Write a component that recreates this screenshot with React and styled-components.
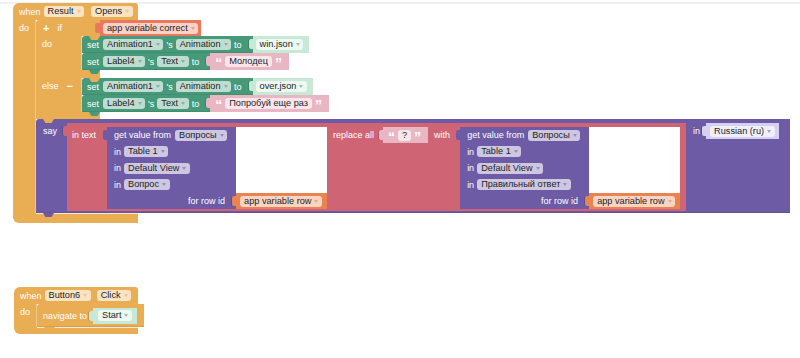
import React from 'react';
import styled, { createGlobalStyle } from 'styled-components';

// block palette
const C = {
	event: '#e9ad54',
	green: '#469a7a',
	mint: '#c8e9d5',
	pink: '#e9b7c3',
	varRed: '#ea785c',
	varOrange: '#e9834f',
	red: '#cf6474',
	purple: '#6d5ba6',
	lilac: '#d7d1f1'
};

const GlobalStyle = createGlobalStyle`
	html, body { margin: 0; padding: 0; background: #fff; }
	body { font-family: "Liberation Sans", Arial, sans-serif; }
`;

const Workspace = styled.div`
	position: relative;
	width: 800px;
	height: 358px;
	overflow: hidden;
	background: #fff;
`;

const TopRule = styled.div`
	margin-top: 2px;
	height: 2px;
	background: #eef0f6;
`;

// top level blocks sit on the free canvas
const EventBlock = styled.div`
	position: absolute;
	left: ${(p) => p.$x}px;
	top: ${(p) => p.$y}px;
	display: flex;
	flex-direction: column;
	align-items: flex-start;
`;

const EventHead = styled.div`
	display: flex;
	align-items: center;
	width: ${(p) => p.$w}px;
	height: 17px;
	box-sizing: border-box;
	padding: 0 6px;
	background: ${C.event};
	border-radius: 6px 3px 0 0;
`;

const Label = styled.span`
	flex: none;
	color: #fff;
	font-size: 9px;
	line-height: 16px;
	white-space: nowrap;
	margin: 0 ${(p) => p.$mr || 0}px 0 ${(p) => p.$ml || 0}px;
`;

const Plus = styled.span`
	flex: none;
	color: #fff;
	font-size: 11px;
	font-weight: bold;
	line-height: 16px;
	margin-left: ${(p) => p.$ml || 0}px;
`;

const Chip = styled.span`
	flex: none;
	display: inline-flex;
	align-items: center;
	gap: 3px;
	height: 11px;
	padding: 0 ${(p) => (p.$plain ? 4 : 3.5)}px 0 4px;
	margin-left: ${(p) => p.$ml || 0}px;
	border-radius: 3px;
	background: rgba(255, 255, 255, 0.66);
	color: #1e1e1e;
	font-size: 9.2px;
	line-height: 11px;
	white-space: nowrap;
`;

const Caret = styled.span`
	width: 0;
	height: 0;
	border-left: 2.5px solid transparent;
	border-right: 2.5px solid transparent;
	border-top: 3px solid ${(p) => p.$c};
	opacity: 0.55;
`;

const Field = ({ c, ml, plain, children }) => (
	<Chip $ml={ml} $plain={plain}>
		{children}
		{!plain && <Caret $c={c} />}
	</Chip>
);

const Quote = styled.span`
	flex: none;
	align-self: flex-start;
	margin-top: 3px;
	height: 12px;
	color: #fff;
	font-size: 14px;
	font-weight: bold;
	line-height: 14px;
`;

const Section = styled.div`
	display: flex;
	align-items: stretch;
`;

const Spine = styled.div`
	flex: none;
	display: flex;
	align-items: flex-start;
	width: ${(p) => p.$w}px;
	box-sizing: border-box;
	padding-left: ${(p) => p.$pl || 6}px;
	background: ${C.event};
`;

const Stack = styled.div`
	display: flex;
	flex-direction: column;
	align-items: flex-start;
	box-shadow: -1px 0 0 rgba(255, 255, 255, 0.35);
`;

// orange arms of C shaped blocks (header, else bar, bottom)
const Arm = styled.div`
	position: relative;
	display: flex;
	align-items: center;
	width: ${(p) => p.$w}px;
	height: ${(p) => p.$h}px;
	box-sizing: border-box;
	padding-left: 7px;
	background: ${C.event};
	border-radius: ${(p) => p.$r || '0'};
	${(p) =>
		p.$tab !== undefined &&
		`&::after {
		content: '';
		position: absolute;
		z-index: 2;
		left: ${p.$tab}px;
		bottom: -4px;
		width: 11px;
		height: 4px;
		background: ${C.event};
		clip-path: polygon(0 0, 100% 0, 78% 100%, 22% 100%);
	}`}
	${(p) =>
		p.$hl !== undefined &&
		`&::before {
		content: '';
		position: absolute;
		left: ${p.$hl}px;
		right: 0;
		top: 0;
		height: 1px;
		background: rgba(255, 255, 255, 0.75);
	}`}
`;

const HeadRow = styled.div`
	display: flex;
	align-items: stretch;
`;

const CBlock = styled.div`
	display: flex;
	flex-direction: column;
	align-items: flex-start;
`;

const StmtRow = styled.div`
	display: flex;
	align-items: stretch;
`;

const StmtBody = styled.div`
	position: relative;
	display: flex;
	align-items: center;
	gap: ${(p) => p.$gap ?? 3}px;
	height: ${(p) => p.$h || 17}px;
	box-sizing: border-box;
	padding: 0 ${(p) => p.$pr ?? 6}px 0 ${(p) => p.$pl ?? 5}px;
	background: ${(p) => p.$c};
	border-radius: 3px 0 0 0;
	box-shadow: inset 0 -1px 0 rgba(0, 0, 0, 0.08);
	&::after {
		content: '';
		position: absolute;
		z-index: 2;
		left: 7px;
		bottom: -4px;
		width: 11px;
		height: 4px;
		background: ${(p) => p.$c};
		clip-path: polygon(0 0, 100% 0, 78% 100%, 22% 100%);
	}
`;

const SayBody = styled(StmtBody)`
	align-items: flex-start;
	height: auto;
	padding: 4px 11px 2px 7px;
`;

const ValueBlock = styled.div`
	position: relative;
	flex: none;
	display: flex;
	align-items: center;
	gap: ${(p) => p.$gap ?? 4}px;
	height: ${(p) => p.$h || 17}px;
	box-sizing: border-box;
	padding: 0 ${(p) => p.$pr ?? 5}px 0 ${(p) => p.$pl ?? 5}px;
	margin-left: ${(p) => p.$ml || 0}px;
	background: ${(p) => p.$c};
	&::before {
		content: '';
		position: absolute;
		left: -4px;
		top: 3px;
		width: 4px;
		height: 10px;
		background: ${(p) => p.$c};
		border-radius: 2px 0 0 2px;
		box-shadow: -1px 0 0 rgba(0, 0, 0, 0.15);
	}
`;

const ReplaceBlock = styled(ValueBlock)`
	align-items: flex-start;
	gap: 0;
	height: auto;
	padding: 4px 6px 2px 5px;
`;

const GetGrid = styled.div`
	position: relative;
	flex: none;
	display: grid;
	grid-template-columns: 129px auto;
	grid-template-rows: 66px 16px;
	margin-left: ${(p) => p.$ml || 0}px;
	&::before {
		content: '';
		position: absolute;
		left: -4px;
		top: 3px;
		width: 4px;
		height: 10px;
		background: ${C.purple};
		border-radius: 2px 0 0 2px;
	}
`;

const GetPanel = styled.div`
	display: flex;
	flex-direction: column;
	padding-left: 7px;
	background: ${C.purple};
`;

const GetLine = styled.div`
	display: flex;
	align-items: center;
	gap: ${(p) => p.$gap ?? 3}px;
	height: 16.5px;
`;

const Blank = styled.div`
	background: #fff;
`;

const GetFoot = styled.div`
	display: flex;
	align-items: center;
	justify-content: flex-end;
	padding-right: 11px;
	background: ${C.purple};
`;

const GetValue = ({ ml, column }) => (
	<GetGrid $ml={ml}>
		<GetPanel>
			<GetLine $gap={4}>
				<Label>get value from</Label>
				<Field c={C.purple}>Вопросы</Field>
			</GetLine>
			<GetLine>
				<Label>in</Label>
				<Field c={C.purple}>Table 1</Field>
			</GetLine>
			<GetLine>
				<Label>in</Label>
				<Field c={C.purple}>Default View</Field>
			</GetLine>
			<GetLine>
				<Label>in</Label>
				<Field c={C.purple}>{column}</Field>
			</GetLine>
		</GetPanel>
		<Blank />
		<GetFoot>
			<Label>for row id</Label>
		</GetFoot>
		<ValueBlock $c={C.varOrange} $h={16} $pl={4} $pr={5}>
			<Field c={C.varOrange}>app variable row</Field>
		</ValueBlock>
	</GetGrid>
);

const SetRow = ({ comp, prop, children }) => (
	<StmtRow>
		<StmtBody $c={C.green} $pr={11}>
			<Label $mr={1}>set</Label>
			<Field c={C.green}>{comp}</Field>
			<Label>'s</Label>
			<Field c={C.green}>{prop}</Field>
			<Label>to</Label>
		</StmtBody>
		{children}
	</StmtRow>
);

const Asset = ({ name }) => (
	<ValueBlock $c={C.mint} $pl={3} $pr={6}>
		<Field c={C.green}>{name}</Field>
	</ValueBlock>
);

const Text = ({ children, h, ml }) => (
	<ValueBlock $c={C.pink} $h={h} $ml={ml} $pl={5} $pr={7} $gap={3}>
		<Quote>“</Quote>
		<Field plain>{children}</Field>
		<Quote>”</Quote>
	</ValueBlock>
);

export default function App() {
	return (
		<Workspace>
			<GlobalStyle />
			<TopRule />

			<EventBlock $x={13} $y={3}>
				<EventHead $w={125}>
					<Label>when</Label>
					<Field c={C.event} ml={3}>
						Result
					</Field>
					<Field c={C.event} ml={7}>
						Opens
					</Field>
				</EventHead>
				<Section>
					<Spine $w={23}>
						<Label>do</Label>
					</Spine>
					<Stack>
						<CBlock>
							<HeadRow>
								<Arm $w={64} $h={16} $r="3px 0 0 0" $tab={53}>
									<Plus>+</Plus>
									<Label $ml={8}>if</Label>
								</Arm>
								<ValueBlock $c={C.varRed} $h={16} $pl={3} $pr={3}>
									<Field c={C.varRed}>app variable correct</Field>
								</ValueBlock>
							</HeadRow>
							<Section>
								<Spine $w={46}>
									<Label>do</Label>
								</Spine>
								<Stack>
									<SetRow comp="Animation1" prop="Animation">
										<Asset name="win.json" />
									</SetRow>
									<SetRow comp="Label4" prop="Text">
										<Text>Молодец</Text>
									</SetRow>
								</Stack>
							</Section>
							<Arm $w={64} $h={8} $tab={53} />
							<Section>
								<Spine $w={46}>
									<Label>else</Label>
									<Plus $ml={8}>−</Plus>
								</Spine>
								<Stack>
									<SetRow comp="Animation1" prop="Animation">
										<Asset name="over.json" />
									</SetRow>
									<SetRow comp="Label4" prop="Text">
										<Text>Попробуй еще раз</Text>
									</SetRow>
								</Stack>
							</Section>
							<Arm $w={64} $h={7} $tab={7} />
						</CBlock>

						<SayBody $c={C.purple} $gap={0}>
							<Label>say</Label>
							<ReplaceBlock $c={C.red} $ml={10}>
								<Label>in text</Label>
								<GetValue ml={11} column="Вопрос" />
								<Label $ml={6}>replace all</Label>
								<Text h={16} ml={9}>
									?
								</Text>
								<Label $ml={6}>with</Label>
								<GetValue ml={10} column="Правильный ответ" />
							</ReplaceBlock>
							<Label $ml={7}>in</Label>
							<ValueBlock $c={C.lilac} $ml={6} $h={16} $pl={4} $pr={4}>
								<Field c={C.purple}>Russian (ru)</Field>
							</ValueBlock>
						</SayBody>
					</Stack>
				</Section>
				<Arm $w={125} $h={10} $r="0 0 0 6px" $hl={23} />
			</EventBlock>

			<EventBlock $x={14} $y={287}>
				<EventHead $w={124}>
					<Label>when</Label>
					<Field c={C.event} ml={3}>
						Button6
					</Field>
					<Field c={C.event} ml={6}>
						Click
					</Field>
				</EventHead>
				<Section>
					<Spine $w={23}>
						<Label>do</Label>
					</Spine>
					<Stack>
						<StmtRow>
							<StmtBody $c={C.event} $h={23} $pl={6} $pr={7} $gap={0}>
								<Label>navigate to</Label>
								<ValueBlock $c={C.mint} $ml={6} $h={16} $pl={5} $pr={5}>
									<Field c={C.green}>Start</Field>
								</ValueBlock>
							</StmtBody>
						</StmtRow>
					</Stack>
				</Section>
				<Arm $w={124} $h={7} $r="0 0 0 6px" $hl={23} />
			</EventBlock>
		</Workspace>
	);
}
